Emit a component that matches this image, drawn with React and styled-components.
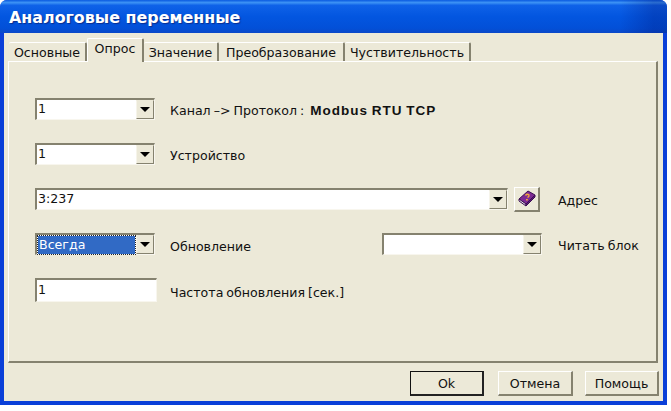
import React from "react";
import styled, { createGlobalStyle } from "styled-components";

const GlobalStyle = createGlobalStyle`
  html, body {
    margin: 0;
    padding: 0;
    background: #fff;
    width: 671px;
    height: 411px;
    overflow: hidden;
  }
`;

const Win = styled.div`
  width: 667px;
  height: 405px;
  display: flex;
  flex-direction: column;
  background: #0a3fd8;
  border-radius: 7px 7px 0 0;
  font-family: "DejaVu Sans", Verdana, sans-serif;
  font-size: 12.6px;
  word-spacing: -1px;
  color: #111;
  overflow: hidden;
`;

const TitleBar = styled.div`
  height: 33px;
  flex: none;
  display: flex;
  align-items: center;
  padding: 0 0 0 9px;
  box-sizing: border-box;
  background:
    linear-gradient(90deg, rgba(0, 20, 120, 0) 93%, rgba(0, 20, 120, 0.3) 98%),
    linear-gradient(180deg, #0a5ae0 0%, #3d93f5 8%, #0f62e8 16%, #0356e0 50%, #0250d8 85%, #0a48c8 100%);
`;

const Title = styled.div`
  color: #fff;
  font-weight: 700;
  font-size: 15.9px;
  word-spacing: 0;
  text-shadow: 1px 1px 1px #0a2f90;
  margin-top: 1px;
`;

const Client = styled.div`
  flex: 1;
  margin: 0 4px 4px 4px;
  background: #ece9d8;
  display: flex;
  flex-direction: column;
  padding: 5px 5px 0 4px;
  min-height: 0;
`;

const TabStrip = styled.div`
  display: flex;
  align-items: flex-end;
  height: 23px;
  flex: none;
  padding-left: 1px;
  position: relative;
  z-index: 1;
`;

const Tab = styled.div`
  width: ${({ $w }) => $w}px;
  height: ${({ $active }) => ($active ? "24px" : "19px")};
  margin-bottom: ${({ $active }) => ($active ? "-1px" : "0")};
  box-sizing: border-box;
  display: flex;
  align-items: ${({ $active }) => ($active ? "flex-start" : "center")};
  justify-content: center;
  padding-top: ${({ $active }) => ($active ? "2px" : "0")};
  background: #ece9d8;
  border-top: 1px solid #fff;
  border-left: ${({ $active }) => ($active ? "1px solid #fff" : "0")};
  border-right: 2px solid #85826f;
  border-radius: 2px 2px 0 0;
  white-space: nowrap;
`;

const Panel = styled.div`
  width: 650px;
  height: 302px;
  flex: none;
  box-sizing: border-box;
  border-top: 1px solid #fff;
  border-left: 1px solid #fff;
  border-right: 2px solid #85826f;
  border-bottom: 2px solid #85826f;
  padding: 36px 0 0 26px;
  display: flex;
  flex-direction: column;
  gap: 23px;
`;

const Row = styled.div`
  display: flex;
  align-items: center;
  height: ${({ $h }) => $h || 22}px;
  flex: none;
`;

const Field = styled.div`
  width: ${({ $w }) => $w}px;
  height: ${({ $h }) => $h || 22}px;
  flex: none;
  box-sizing: border-box;
  margin-left: ${({ $ml }) => $ml || 0}px;
  background: #fff;
  border-top: 2px solid #85826f;
  border-left: 2px solid #85826f;
  border-right: 1px solid #f8f6ee;
  border-bottom: 1px solid #f8f6ee;
  display: flex;
  align-items: stretch;
`;

const Value = styled.div`
  flex: 1;
  padding-left: 1px;
  line-height: ${({ $lh }) => $lh || 18}px;
`;

const Selected = styled.div`
  flex: 1;
  margin: 1px 1px 0;
  padding-left: 1px;
  line-height: 17px;
  color: #fff;
  background: #316ac5;
  outline: 1px dotted #222;
`;

const DropButton = styled.div`
  width: 18px;
  flex: none;
  box-sizing: border-box;
  background: #ece9d8;
  border-top: 1px solid #ece9d8;
  border-left: 1px solid #f6f4ea;
  border-right: 1px solid #85826f;
  border-bottom: 1px solid #85826f;
  display: flex;
  align-items: center;
  justify-content: center;
  &::after {
    content: "";
    display: block;
    width: 0;
    height: 0;
    border-left: 5px solid transparent;
    border-right: 5px solid transparent;
    border-top: 5px solid #000;
  }
`;

const Label = styled.div`
  margin-left: ${({ $ml }) => $ml || 15}px;
  margin-top: ${({ $mt }) => $mt || 2}px;
  white-space: nowrap;
`;

const Strong = styled.span`
  font-family: "Liberation Sans", Arial, sans-serif;
  font-size: 13.5px;
  font-weight: 700;
  letter-spacing: 1px;
  margin-left: 6px;
`;

const BookButton = styled.div`
  width: 26px;
  height: 25px;
  flex: none;
  margin-left: 6px;
  box-sizing: border-box;
  background: #ece9d8;
  border-top: 1px solid #fff;
  border-left: 1px solid #fff;
  border-right: 2px solid #85826f;
  border-bottom: 2px solid #85826f;
  display: flex;
  align-items: center;
  justify-content: center;
`;

const Footer = styled.div`
  flex: 1;
  display: flex;
  justify-content: flex-end;
  align-items: flex-start;
  padding-top: 8px;
  margin-right: -1px;
`;

const Button = styled.div`
  width: ${({ $w }) => $w}px;
  height: 25px;
  margin-left: ${({ $ml }) => $ml || 0}px;
  box-sizing: border-box;
  display: flex;
  align-items: center;
  justify-content: center;
  background: #ece9d8;
  border-top: 1px solid ${({ $def }) => ($def ? "#111" : "#fff")};
  border-left: 1px solid ${({ $def }) => ($def ? "#111" : "#fff")};
  border-right: 2px solid ${({ $def }) => ($def ? "#222" : "#85826f")};
  border-bottom: 2px solid ${({ $def }) => ($def ? "#222" : "#85826f")};
`;

const tabs = [
  ["Основные", 78],
  ["Опрос", 57, true],
  ["Значение", 75],
  ["Преобразование", 126],
  ["Чуствительность", 126],
];

const BookIcon = () => (
  <svg width="18" height="17" viewBox="0 0 18 17">
    <path d="M1 9 L10 1 L17 5 L8 14 Z" fill="#7d2a94" stroke="#3c0f52" strokeWidth="1" />
    <path d="M1 9 L1 11 L8 16 L8 14 Z" fill="#e8e4f0" stroke="#3c0f52" strokeWidth="1" />
    <path d="M8 14 L8 16 L17 7 L17 5 Z" fill="#5b1a78" stroke="#3c0f52" strokeWidth="1" />
    <path d="M7.5 5.5 Q9 3.5 11 5 Q11.5 6.5 9.5 7.5" fill="none" stroke="#f2a83a" strokeWidth="1.4" />
    <rect x="8" y="9" width="1.8" height="1.5" fill="#f2a83a" />
  </svg>
);

export default function App() {
  return (
    <>
      <GlobalStyle />
      <Win>
        <TitleBar>
          <Title>Аналоговые переменные</Title>
        </TitleBar>
        <Client>
          <TabStrip>
            {tabs.map(([name, w, active]) => (
              <Tab key={name} $w={w} $active={active}>{name}</Tab>
            ))}
          </TabStrip>
          <Panel>
            <Row>
              <Field $w={120}>
                <Value>1</Value>
                <DropButton />
              </Field>
              <Label>
                Канал –&gt; Протокол :<Strong>Modbus RTU TCP</Strong>
              </Label>
            </Row>
            <Row>
              <Field $w={120}>
                <Value>1</Value>
                <DropButton />
              </Field>
              <Label>Устройство</Label>
            </Row>
            <Row>
              <Field $w={473}>
                <Value>3:237</Value>
                <DropButton />
              </Field>
              <BookButton>
                <BookIcon />
              </BookButton>
              <Label $ml={18}>Адрес</Label>
            </Row>
            <Row>
              <Field $w={120}>
                <Selected>Всегда</Selected>
                <DropButton />
              </Field>
              <Label $mt={4}>Обновление</Label>
              <Field $w={160} $ml={131}>
                <Value />
                <DropButton />
              </Field>
              <Label $ml={16}>Читать блок</Label>
            </Row>
            <Row $h={24}>
              <Field $w={122} $h={24}>
                <Value $lh={20}>1</Value>
              </Field>
              <Label $ml={13} $mt={4}>Частота обновления [сек.]</Label>
            </Row>
          </Panel>
          <Footer>
            <Button $w={74} $def>Ok</Button>
            <Button $w={75} $ml={14}>Отмена</Button>
            <Button $w={74} $ml={12}>Помощь</Button>
          </Footer>
        </Client>
      </Win>
    </>
  );
}
